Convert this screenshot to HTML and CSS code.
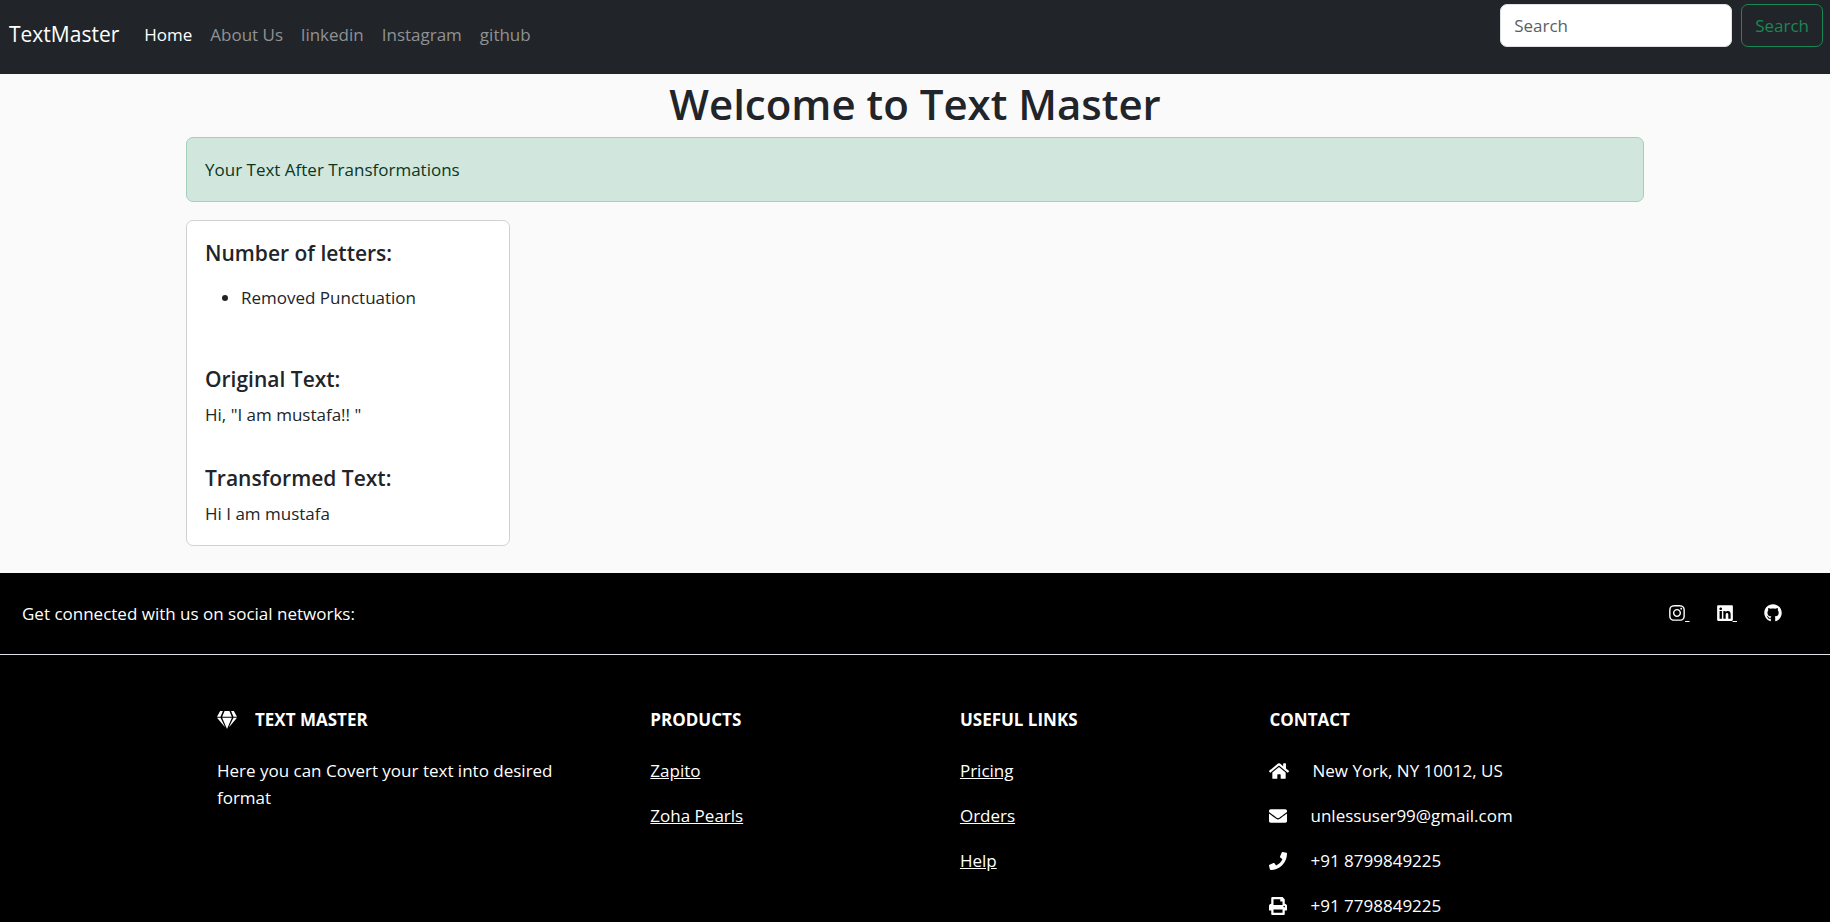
FILE: index.html
```html
<!DOCTYPE html>
<html lang="en">
<head>
<meta charset="utf-8">
<meta name="viewport" content="width=device-width, initial-scale=1">
<title>TextMaster</title>
<link rel="stylesheet" href="styles.css">
</head>
<body>
<header class="navbar">
  <a class="brand" href="#">TextMaster</a>
  <nav class="nav">
    <a class="nav-link active" href="#">Home</a>
    <a class="nav-link" href="#">About Us</a>
    <a class="nav-link" href="#">linkedin</a>
    <a class="nav-link" href="#">Instagram</a>
    <a class="nav-link" href="#">github</a>
  </nav>
  <form class="search">
    <input class="search-input" type="search" placeholder="Search" aria-label="Search">
    <button class="search-button" type="button">Search</button>
  </form>
</header>

<main class="container">
  <h1 class="title">Welcome to Text Master</h1>
  <div class="alert" role="alert">Your Text After Transformations</div>
  <section class="card">
    <h5 class="card-title">Number of letters:</h5>
    <ul class="card-list">
      <li>Removed Punctuation</li>
    </ul>
    <h5 class="card-title">Original Text:</h5>
    <p class="card-text">Hi, "I am mustafa!! "</p>
    <h5 class="card-title">Transformed Text:</h5>
    <p class="card-text">Hi I am mustafa</p>
  </section>
</main>

<footer class="footer">
  <section class="social">
    <span>Get connected with us on social networks:</span>
    <div class="social-links">
      <a href="#" aria-label="Instagram"><svg class="icon icon-brand" viewBox="0 0 448 512"><path d="M224.1 141c-63.6 0-114.9 51.3-114.9 114.9s51.3 114.9 114.9 114.9S339 319.5 339 255.9 287.7 141 224.1 141zm0 189.6c-41.1 0-74.7-33.5-74.7-74.7s33.5-74.7 74.7-74.7 74.7 33.5 74.7 74.7-33.6 74.7-74.7 74.7zm146.4-194.3c0 14.9-12 26.8-26.8 26.8-14.9 0-26.8-12-26.8-26.8s12-26.8 26.8-26.8 26.8 12 26.8 26.8zm76.1 27.2c-1.7-35.9-9.9-67.7-36.2-93.9-26.2-26.2-58-34.4-93.9-36.2-37-2.1-147.9-2.1-184.9 0-35.8 1.7-67.6 9.9-93.9 36.1s-34.4 58-36.2 93.9c-2.1 37-2.1 147.9 0 184.9 1.7 35.9 9.9 67.7 36.2 93.9s58 34.4 93.9 36.2c37 2.1 147.9 2.1 184.9 0 35.9-1.7 67.7-9.9 93.9-36.2 26.2-26.2 34.4-58 36.2-93.9 2.1-37 2.1-147.8 0-184.8zM398.8 388c-7.8 19.6-22.9 34.7-42.6 42.6-29.5 11.7-99.5 9-132.1 9s-102.7 2.6-132.1-9c-19.6-7.8-34.7-22.9-42.6-42.6-11.7-29.5-9-99.5-9-132.1s-2.6-102.7 9-132.1c7.8-19.6 22.9-34.7 42.6-42.6 29.5-11.7 99.5-9 132.1-9s102.7-2.6 132.1 9c19.6 7.8 34.7 22.9 42.6 42.6 11.7 29.5 9 99.5 9 132.1s2.7 102.7-9 132.1z"/></svg>&nbsp;</a>
      <a href="#" aria-label="LinkedIn"><svg class="icon icon-brand" viewBox="0 0 448 512"><path d="M416 32H31.9C14.3 32 0 46.5 0 64.3v383.4C0 465.5 14.3 480 31.9 480H416c17.6 0 32-14.5 32-32.3V64.3c0-17.8-14.4-32.3-32-32.3zM135.4 416H69V202.2h66.5V416zm-33.2-243c-21.3 0-38.5-17.3-38.5-38.5S80.9 96 102.2 96c21.2 0 38.5 17.3 38.5 38.5 0 21.3-17.2 38.5-38.5 38.5zm282.1 243h-66.4V312c0-24.8-.5-56.7-34.5-56.7-34.6 0-39.9 27-39.9 54.9V416h-66.4V202.2h63.7v29.2h.9c8.9-16.8 30.6-34.5 62.9-34.5 67.2 0 79.7 44.3 79.7 101.9V416z"/></svg>&nbsp;</a>
      <a href="#" aria-label="GitHub"><svg class="icon" viewBox="0 0 496 512"><path d="M165.9 397.4c0 2-2.3 3.6-5.2 3.6-3.3.3-5.6-1.3-5.6-3.6 0-2 2.3-3.6 5.2-3.6 3-.3 5.6 1.3 5.6 3.6zm-31.1-4.5c-.7 2 1.3 4.3 4.3 4.9 2.6 1 5.6 0 6.2-2s-1.3-4.3-4.3-5.2c-2.6-.7-5.5.3-6.2 2.3zm44.2-1.7c-2.9.7-4.9 2.6-4.6 4.9.3 2 2.9 3.3 5.9 2.6 2.9-.7 4.9-2.6 4.6-4.6-.3-1.9-3-3.2-5.9-2.9zM244.8 8C106.1 8 0 113.3 0 252c0 110.9 69.8 205.8 169.5 239.2 12.8 2.3 17.3-5.6 17.3-12.1 0-6.2-.3-40.4-.3-61.4 0 0-70 15-84.7-29.8 0 0-11.4-29.1-27.8-36.6 0 0-22.9-15.7 1.6-15.4 0 0 24.9 2 38.6 25.8 21.9 38.6 58.6 27.5 72.9 20.9 2.3-16 8.8-27.1 16-33.7-55.9-6.2-112.3-14.3-112.3-110.5 0-27.5 7.6-41.3 23.6-58.9-2.6-6.5-11.1-33.3 2.6-67.9 20.9-6.5 69 27 69 27 20-5.6 41.5-8.5 62.8-8.5s42.8 2.9 62.8 8.5c0 0 48.1-33.6 69-27 13.7 34.7 5.2 61.4 2.6 67.9 16 17.7 25.8 31.5 25.8 58.9 0 96.5-58.9 104.2-114.8 110.5 9.2 7.9 17 22.9 17 46.4 0 33.7-.3 75.4-.3 83.6 0 6.5 4.6 14.4 17.3 12.1C428.2 457.8 496 362.9 496 252 496 113.3 383.5 8 244.8 8z"/></svg></a>
    </div>
  </section>

  <div class="footer-row">
    <section class="column wide">
      <h6 class="column-title"><svg class="icon icon-wide gem" viewBox="0 0 576 512"><path d="M485.5 0L576 160H474.9L405.7 0h79.8zm-128 0l69.2 160H149.3L218.5 0h139zm-267 0h79.8l-69.2 160H0L90.5 0zM0 192h100.7l123 251.7c1.5 3.1-2.7 5.9-5 3.3L0 192zm148.2 0h279.6l-137 318.2c-1 2.4-4.5 2.4-5.5 0L148.2 192zm204.1 251.7l123-251.7H576L357.3 446.9c-2.3 2.7-6.5-.1-5-3.2z"/></svg>Text Master</h6>
      <p>Here you can Covert your text into desired format</p>
    </section>
    <section class="column">
      <h6 class="column-title">Products</h6>
      <p><a href="#">Zapito</a></p>
      <p><a href="#">Zoha Pearls</a></p>
    </section>
    <section class="column">
      <h6 class="column-title">Useful links</h6>
      <p><a href="#">Pricing</a></p>
      <p><a href="#">Orders</a></p>
      <p><a href="#">Help</a></p>
    </section>
    <section class="column wide">
      <h6 class="column-title">Contact</h6>
      <p class="contact"><svg class="icon icon-wide" viewBox="0 0 576 512"><path d="M280.37 148.26L96 300.11V464a16 16 0 0 0 16 16l112.06-.29a16 16 0 0 0 15.92-16V368a16 16 0 0 1 16-16h64a16 16 0 0 1 16 16v95.64a16 16 0 0 0 16 16.05L464 480a16 16 0 0 0 16-16V300L295.67 148.26a12.19 12.19 0 0 0-15.3 0zM571.6 251.47L488 182.56V44.05a12 12 0 0 0-12-12h-56a12 12 0 0 0-12 12v72.61L318.47 43a48 48 0 0 0-61 0L4.34 251.47a12 12 0 0 0-1.6 16.9l25.5 31A12 12 0 0 0 45.15 301l235.22-193.74a12.19 12.19 0 0 1 15.3 0L530.9 301a12 12 0 0 0 16.9-1.6l25.5-31a12 12 0 0 0-1.7-16.93z"/></svg>New York, NY 10012, US</p>
      <p class="contact"><svg class="icon" viewBox="0 0 512 512"><path d="M502.3 190.8c3.9-3.1 9.7-.2 9.7 4.7V400c0 26.5-21.5 48-48 48H48c-26.5 0-48-21.5-48-48V195.6c0-5 5.7-7.8 9.7-4.7 22.4 17.4 52.1 39.5 154.1 113.6 21.1 15.4 56.7 47.8 92.2 47.6 35.7.3 72-32.8 92.3-47.6 102-74.1 131.6-96.3 154-113.7zM256 320c23.2.4 56.6-29.2 73.4-41.4 132.7-96.3 142.8-104.7 173.4-128.7 5.8-4.5 9.2-11.5 9.2-18.9v-19c0-26.5-21.5-48-48-48H48c-26.5 0-48 21.5-48 48v19c0 7.4 3.4 14.3 9.2 18.9 30.6 23.9 40.7 32.4 173.4 128.7 16.8 12.2 50.2 41.8 73.4 41.4z"/></svg>unlessuser99@gmail.com</p>
      <p class="contact"><svg class="icon" viewBox="0 0 512 512"><path d="M493.4 24.6l-104-24c-11.3-2.6-22.9 3.3-27.5 13.9l-48 112c-4.2 9.8-1.4 21.3 6.9 28l60.6 49.6c-36 76.7-98.9 140.5-177.2 177.2l-49.6-60.6c-6.8-8.3-18.2-11.1-28-6.9l-112 48C3.9 366.5-2 378.1.6 389.4l24 104C27.1 504.2 36.7 512 48 512c256.1 0 464-207.5 464-464 0-11.2-7.7-20.9-18.6-23.4z"/></svg>+91 8799849225</p>
      <p class="contact"><svg class="icon" viewBox="0 0 512 512"><path d="M448 192V77.25c0-8.49-3.37-16.62-9.37-22.63L393.37 9.37c-6-6-14.14-9.37-22.63-9.37H96C78.33 0 64 14.33 64 32v160c-35.35 0-64 28.65-64 64v112c0 8.84 7.16 16 16 16h48v96c0 17.67 14.33 32 32 32h320c17.67 0 32-14.33 32-32v-96h48c8.84 0 16-7.16 16-16V256c0-35.35-28.65-64-64-64zm-64 256H128v-96h256v96zm0-224H128V64h192v48c0 8.84 7.16 16 16 16h48v96zm48 72c-13.25 0-24-10.75-24-24 0-13.26 10.75-24 24-24s24 10.74 24 24c0 13.25-10.75 24-24 24z"/></svg>+91 7798849225</p>
    </section>
  </div>
</footer>
</body>
</html>
```

FILE: styles.css
```css
* {
  box-sizing: border-box;
}

body {
  margin: 0;
  min-height: 100vh;
  display: flex;
  flex-direction: column;
  background: #fafafa;
  color: #212529;
  font-family: "Segoe UI", "Open Sans", "Noto Sans", sans-serif;
  font-size: 17px;
  line-height: 27px;
}

h1, h5, h6, p, ul {
  margin: 0;
}

/* Navigation bar */
.navbar {
  display: flex;
  align-items: center;
  padding: 4px 7px 9px 9px;
  background: #212529;
}

.brand {
  margin-right: 16px;
  color: #fff;
  font-size: 21px;
  text-decoration: none;
}

.nav {
  display: flex;
  flex: 1;
}

.nav-link {
  padding: 9px;
  color: #909294;
  text-decoration: none;
}

.nav-link.active {
  color: #fff;
}

.search {
  display: flex;
  gap: 9px;
  margin-bottom: 18px;
}

.search-input,
.search-button {
  height: 43px;
  padding: 0 13px;
  border: 1px solid #dee2e6;
  border-radius: 7px;
  font: inherit;
}

.search-input {
  width: 232px;
  background: #fff;
  color: #212529;
}

.search-input::placeholder {
  color: #595f65;
  opacity: 1;
}

.search-button {
  border-color: #198754;
  background: transparent;
  color: #198754;
}

/* Result */
.container {
  width: 100%;
  max-width: 1486px;
  margin: 0 auto;
  padding: 0 14px 27px;
}

.title {
  margin-bottom: 3px;
  font-size: 42px;
  font-weight: 600;
  line-height: 60px;
  text-align: center;
}

.alert {
  margin-bottom: 18px;
  padding: 18px;
  border: 1px solid #a3cfbb;
  border-radius: 7px;
  background: #d1e7dd;
  color: #0a3622;
}

.card {
  width: 324px;
  max-width: 100%;
  padding: 18px;
  border: 1px solid #d0d1d2;
  border-radius: 7px;
  background: #fff;
}

.card-title {
  margin-bottom: 7px;
  font-size: 21px;
  font-weight: 600;
  line-height: 29px;
}

.card-list {
  margin: 16px 0 54px;
  padding-left: 36px;
}

.card-title:has(+ .card-list) {
  margin-bottom: 16px;
}

.card-text + .card-title {
  margin-top: 36px;
}

/* Footer */
.footer {
  flex: 1;
  background: #000;
  color: #fff;
}

.footer a {
  color: inherit;
}

.social {
  display: flex;
  justify-content: space-between;
  padding: 27px 48px 27px 22px;
  border-bottom: 1px solid #dee2e6;
}

.social-links {
  display: flex;
  gap: 27px;
}

.footer-row {
  display: flex;
  max-width: 1486px;
  margin: 0 auto;
  padding-top: 54px;
}

.column {
  width: 16.6667%;
  margin: 0 auto;
  padding: 0 14px;
}

.column.wide {
  width: 25%;
}

.column p + p {
  margin-top: 18px;
}

.column-title {
  display: flex;
  align-items: center;
  margin-bottom: 27px;
  font-size: 17px;
  font-weight: 700;
  line-height: 21px;
  text-transform: uppercase;
}

.contact {
  display: flex;
  align-items: center;
}

/* Icons */
.icon {
  width: 18px;
  height: 18px;
  flex: none;
  fill: currentColor;
  vertical-align: -2px;
}

.icon-brand {
  width: 16px;
}

.icon-wide {
  width: 20px;
}

.gem {
  margin-right: 18px;
}

.contact .icon {
  margin-right: 23px;
}
```
